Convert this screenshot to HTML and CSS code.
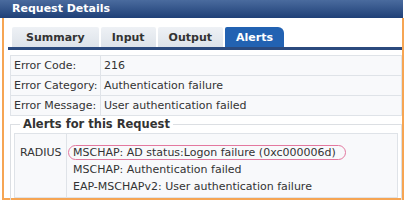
FILE: index.html
```html
<!DOCTYPE html>
<html>
<head>
    <title>Request Details</title>
    <link rel="stylesheet" href="styles.css">
</head>
<body>
    <div class="panel">
        <div class="panel-header">Request Details</div>
        <div class="panel-body">
            <div class="tabs">
                <div class="tab">Summary</div>
                <div class="tab">Input</div>
                <div class="tab">Output</div>
                <div class="tab active">Alerts</div>
            </div>
            <table class="info-table">
                <tr>
                    <td class="label">Error Code:</td>
                    <td>216</td>
                </tr>
                <tr>
                    <td class="label">Error Category:</td>
                    <td>Authentication failure</td>
                </tr>
                <tr>
                    <td class="label">Error Message:</td>
                    <td>User authentication failed</td>
                </tr>
            </table>
            <fieldset class="alerts">
                <legend>Alerts for this Request</legend>
                <table class="alert-table">
                    <tr>
                        <td class="source">RADIUS</td>
                        <td class="messages">
                            <div><span class="marked">MSCHAP: AD status:Logon failure (0xc000006d)</span></div>
                            <div>MSCHAP: Authentication failed</div>
                            <div>EAP-MSCHAPv2: User authentication failure</div>
                        </td>
                    </tr>
                </table>
            </fieldset>
        </div>
    </div>
</body>
</html>
```

FILE: styles.css
```css
body {
    margin: 0;
    background: white;
    font-family: "DejaVu Sans", Verdana, sans-serif;
    font-size: 11px;
    color: #333;
}
.panel {
    width: 404px;
}
.panel-header {
    height: 18px;
    line-height: 17px;
    padding-left: 12px;
    width: 391px;
    background: linear-gradient(#4a6b9e, #1f4077);
    color: white;
    font-weight: bold;
}
.panel-body {
    margin-left: 2px;
    border: 2px solid #f6a553;
    border-top: none;
    height: 182px;
    padding-top: 9px;
    box-sizing: border-box;
}
.tabs {
    display: flex;
    gap: 2px;
    margin-left: 4px;
    padding-left: 4px;
    border-bottom: 3px solid #2b4a7e;
}
.tab {
    height: 20px;
    line-height: 21px;
    padding: 0 11px;
    background: linear-gradient(#eef1f5, #dde3ea);
    font-weight: bold;
    color: #333;
    border-radius: 2px 2px 0 0;
}
.tab:first-child {
    padding: 0 14px;
}
.tab.active {
    background: #2262b2;
    color: white;
    border-radius: 2px 6px 0 0;
}
.info-table {
    margin: 5px 0 0 6px;
    width: 392px;
    border-collapse: collapse;
}
.info-table td {
    border: 1px solid #dfe3e8;
    background: #f8f9fb;
    height: 19px;
    padding: 0 0 0 3px;
}
.info-table .label {
    width: 86px;
}
.alerts {
    margin: 1px 0 0 6px;
    width: 392px;
    box-sizing: border-box;
    border: 1px solid #dcdfe3;
    padding: 2px 3px 3px 3px;
}
.alerts legend {
    font-weight: bold;
    padding: 0 3px;
    margin-left: 6px;
    font-size: 11.5px;
}
.alert-table {
    width: 100%;
    border-collapse: collapse;
}
.alert-table td {
    border: 1px solid #dfe3e8;
    background: #f8f9fb;
    vertical-align: top;
    padding: 4px 0 2px 5px;
    line-height: 17px;
}
.alert-table .source {
    width: 46px;
    padding-top: 10px;
}
.alert-table .messages {
    padding-left: 1px;
    padding-top: 10px;
}
.messages div {
    padding-left: 5px;
}
.marked {
    display: inline-block;
    margin-left: -5px;
    padding: 0 9px 0 4px;
    line-height: 13px;
    border: 1.5px solid #e3789f;
    border-radius: 8px;
}
```
